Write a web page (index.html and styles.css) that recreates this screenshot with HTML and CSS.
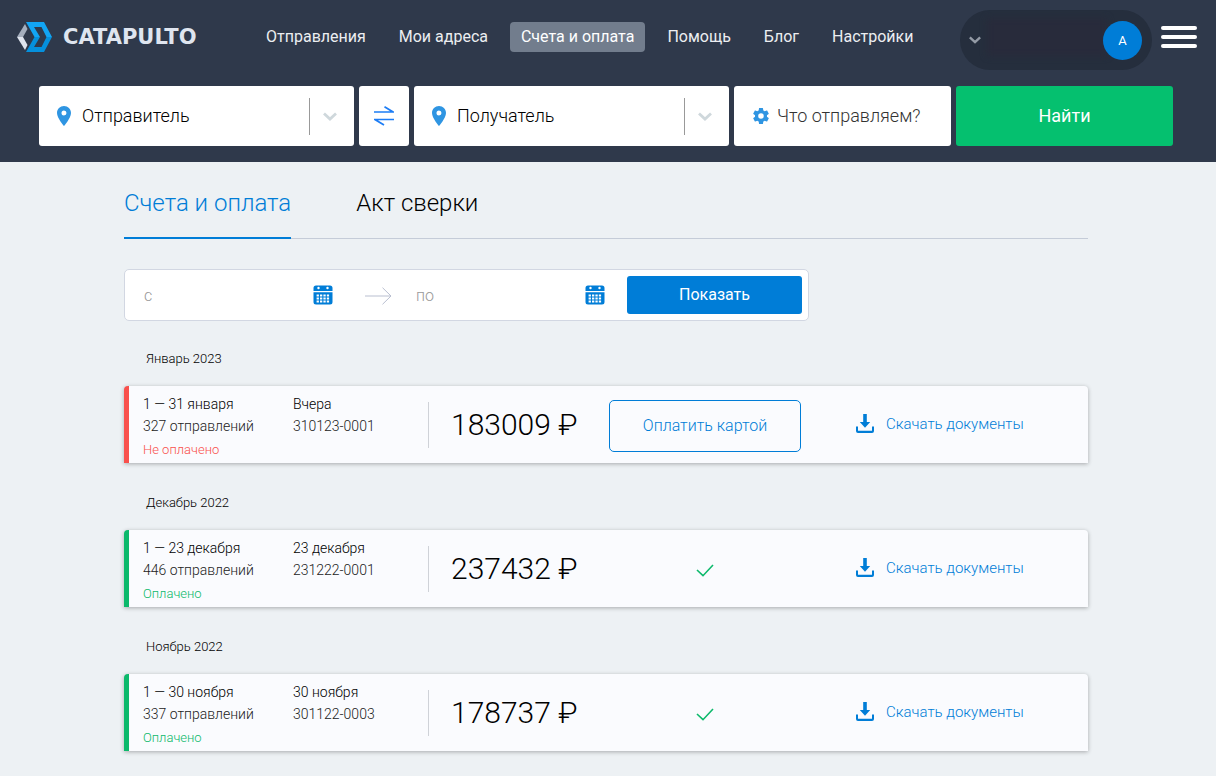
FILE: index.html
```html
<!DOCTYPE html>
<html lang="ru">
<head>
<meta charset="utf-8">
<meta name="viewport" content="width=device-width, initial-scale=1">
<title>Catapulto — Счета и оплата</title>
<link rel="stylesheet" href="styles.css">
</head>
<body>
<svg class="sprite" aria-hidden="true">
  <symbol id="pin" viewBox="0 0 14 20"><path fill-rule="evenodd" d="M7 0C3.1 0 0 3.1 0 7c0 5 7 13 7 13s7-8 7-13c0-3.900-3.100-7-7-7zm0 9.500a2.500 2.500 0 1 1 0-5 2.500 2.500 0 0 1 0 5z"/></symbol>
  <symbol id="chevron" viewBox="0 0 14 9"><path d="M1 1.500l6 5.500 6-5.500" fill="none" stroke="currentColor" stroke-width="2.800"/></symbol>
  <symbol id="calendar" viewBox="0 0 20 20"><path fill-rule="evenodd" d="M3 .5h14Q19.500.5 19.500 3v3H.5V3Q.5.5 3 .5zM5.500 1.800a1.200 1.200 0 1 0 0 2.400 1.200 1.200 0 0 0 0-2.400zm9 0a1.200 1.200 0 1 0 0 2.400 1.200 1.200 0 0 0 0-2.400zM.5 7.300h19V17q0 2.500-2.500 2.500H3Q.5 19.500.5 17z"/><path fill="#fff" d="M7 9.500h2.300v2H7zm3.400 0h2.300v2h-2.300zm3.400 0h2.300v2h-2.300zM3.600 12.500h2.300v2H3.600zm3.400 0h2.300v2H7zm3.400 0h2.300v2h-2.300zm3.400 0h2.300v2h-2.300zM3.600 15.500h2.300v2H3.600zm3.400 0h2.300v2H7zm3.400 0h2.300v2h-2.300zm3.400 0h2.300v2h-2.300zM3.600 9.500h2.300v2H3.600z"/></symbol>
  <symbol id="download" viewBox="0 0 18 19"><path d="M7.200 0h3.600v8h3.400L9 13.800 3.800 8h3.400zM0 12.500h2v4.200h14v-4.200h2V17q0 2-2 2H2q-2 0-2-2z"/></symbol>
  <symbol id="check" viewBox="0 0 18 13"><path d="M1 6l6 5.700L17 1" fill="none" stroke="currentColor" stroke-width="1.600"/></symbol>
</svg>

<header class="header">
  <div class="header-top">
    <a class="logo" href="#" aria-label="Catapulto">
      <svg class="logo-mark" viewBox="0 0 36 30" aria-hidden="true">
        <path fill="#a5aebd" d="M8 2l2.500 5-4.500 8H0z"/>
        <path fill="#dfe4ee" d="M0 15h6l4.500 8L8 28z"/>
        <path fill="#12a5f4" fill-rule="evenodd" d="M9 0h18l8 15h-5.500L24.500 5H17l6 10h-5.500z"/>
        <path fill="#0590dc" d="M35 15l-8 15H9l8.500-15H23l-6 10h7.500l5-10z"/>
      </svg>
      <span class="logo-text">CATAPULTO</span>
    </a>
    <nav class="nav" aria-label="Основное меню">
      <a class="nav-link" href="#">Отправления</a>
      <a class="nav-link" href="#">Мои адреса</a>
      <a class="nav-link nav-link-active" href="#" aria-current="page">Счета и оплата</a>
      <a class="nav-link" href="#">Помощь</a>
      <a class="nav-link" href="#">Блог</a>
      <a class="nav-link" href="#">Настройки</a>
    </nav>
    <button class="user" type="button" aria-label="Профиль">
      <svg class="user-chevron" aria-hidden="true"><use href="#chevron"/></svg>
      <span class="user-name"></span>
      <span class="avatar">A</span>
    </button>
    <button class="burger" type="button" aria-label="Меню"><span></span><span></span><span></span></button>
  </div>

  <form class="search">
    <div class="field">
      <svg class="pin" aria-hidden="true"><use href="#pin"/></svg>
      <input class="field-input" type="text" placeholder="Отправитель" aria-label="Отправитель">
      <button class="field-toggle" type="button" aria-label="Выбрать отправителя"><svg class="chevron" aria-hidden="true"><use href="#chevron"/></svg></button>
    </div>
    <button class="swap" type="button" aria-label="Поменять местами">
      <svg class="swap-icon" viewBox="0 0 20 20" aria-hidden="true"><path d="M0 6h19L10.500.8M20 13.500H1l9 5.500" fill="none" stroke="#1d7df5" stroke-width="1.700"/></svg>
    </button>
    <div class="field">
      <svg class="pin" aria-hidden="true"><use href="#pin"/></svg>
      <input class="field-input" type="text" placeholder="Получатель" aria-label="Получатель">
      <button class="field-toggle" type="button" aria-label="Выбрать получателя"><svg class="chevron" aria-hidden="true"><use href="#chevron"/></svg></button>
    </div>
    <div class="field field-cargo">
      <svg class="gear" viewBox="2 2 20 20" aria-hidden="true"><path d="M19.430 12.980c.04-.32.07-.64.07-.98s-.03-.66-.07-.98l2.110-1.650c.19-.15.24-.42.12-.64l-2-3.460c-.12-.22-.39-.3-.61-.22l-2.490 1c-.52-.4-1.080-.73-1.690-.98l-.38-2.650A.49.49 0 0 0 14 2h-4c-.25 0-.46.18-.49.42l-.38 2.650c-.61.25-1.170.59-1.690.98l-2.490-1c-.23-.09-.49 0-.61.22l-2 3.460c-.13.22-.07.49.12.64l2.110 1.650c-.04.32-.07.65-.07.98s.03.66.07.98l-2.110 1.650c-.19.15-.24.42-.12.64l2 3.460c.12.22.39.3.61.22l2.490-1c.52.4 1.080.73 1.690.98l.38 2.650c.03.24.24.42.49.42h4c.25 0 .46-.18.49-.42l.38-2.650c.61-.25 1.170-.59 1.690-.98l2.490 1c.23.09.49 0 .61-.22l2-3.460c.12-.22.07-.49-.12-.64zM12 15.500a3.500 3.500 0 1 1 0-7 3.500 3.500 0 0 1 0 7z"/></svg>
      <input class="field-input field-input-muted" type="text" placeholder="Что отправляем?" aria-label="Что отправляем?">
    </div>
    <button class="find" type="submit">Найти</button>
  </form>
</header>

<main class="main">
  <nav class="tabs" aria-label="Разделы">
    <a class="tab tab-active" href="#" aria-current="page">Счета и оплата</a>
    <a class="tab" href="#">Акт сверки</a>
  </nav>

  <form class="filter">
    <input class="date" type="text" placeholder="с" aria-label="Дата с">
    <button class="date-button" type="button" aria-label="Выбрать дату начала"><svg class="calendar" aria-hidden="true"><use href="#calendar"/></svg></button>
    <svg class="arrow" viewBox="0 0 27 18" aria-hidden="true"><path d="M0 9h26M17.500.7L26 9l-8.500 8.300" fill="none" stroke="#b9bfd0"/></svg>
    <input class="date" type="text" placeholder="по" aria-label="Дата по">
    <button class="date-button" type="button" aria-label="Выбрать дату окончания"><svg class="calendar" aria-hidden="true"><use href="#calendar"/></svg></button>
    <button class="show" type="submit">Показать</button>
  </form>

  <section class="month">
    <h2 class="month-title">Январь 2023</h2>
    <article class="bill bill-unpaid">
      <div class="period"><p class="strong">1 — 31 января</p><p>327 отправлений</p><p class="status">Не оплачено</p></div>
      <div class="number"><p class="strong">Вчера</p><p>310123-0001</p></div>
      <p class="amount">183009 ₽</p>
      <div class="payment"><button class="pay" type="button">Оплатить картой</button></div>
      <a class="download" href="#"><svg class="download-icon" aria-hidden="true"><use href="#download"/></svg>Скачать документы</a>
    </article>
  </section>

  <section class="month">
    <h2 class="month-title">Декабрь 2022</h2>
    <article class="bill">
      <div class="period"><p class="strong">1 — 23 декабря</p><p>446 отправлений</p><p class="status">Оплачено</p></div>
      <div class="number"><p class="strong">23 декабря</p><p>231222-0001</p></div>
      <p class="amount">237432 ₽</p>
      <div class="payment"><svg class="check" aria-hidden="true"><use href="#check"/></svg></div>
      <a class="download" href="#"><svg class="download-icon" aria-hidden="true"><use href="#download"/></svg>Скачать документы</a>
    </article>
  </section>

  <section class="month">
    <h2 class="month-title">Ноябрь 2022</h2>
    <article class="bill">
      <div class="period"><p class="strong">1 — 30 ноября</p><p>337 отправлений</p><p class="status">Оплачено</p></div>
      <div class="number"><p class="strong">30 ноября</p><p>301122-0003</p></div>
      <p class="amount">178737 ₽</p>
      <div class="payment"><svg class="check" aria-hidden="true"><use href="#check"/></svg></div>
      <a class="download" href="#"><svg class="download-icon" aria-hidden="true"><use href="#download"/></svg>Скачать документы</a>
    </article>
  </section>
</main>
</body>
</html>
```

FILE: styles.css
```css
* { box-sizing: border-box; }
body { margin: 0; background: #edf1f4; color: #000; font: 300 14px/22px Roboto, "Liberation Sans", sans-serif; }
button, input { font: inherit; margin: 0; padding: 0; border: 0; background: none; color: inherit; }
button { cursor: pointer; }
a { color: inherit; text-decoration: none; }
p, h2 { margin: 0; }
svg { display: block; flex: none; }
.sprite { position: absolute; width: 0; height: 0; }

.header { background: #2f394b; padding-bottom: 16px; }
.header-top { display: flex; align-items: center; height: 74px; padding: 0 19px 0 17px; }
.logo { display: flex; align-items: center; gap: 10px; width: 238px; }
.logo-mark { width: 36px; height: 30px; }
.logo-text { color: #dfe5ef; font: 700 21px/24px "DejaVu Sans", sans-serif; }
.nav { display: flex; gap: 11px; }
.nav-link { padding: 0 11px 1px; border-radius: 4px; color: #eceef1; font-size: 16px; font-weight: 400; line-height: 29px; white-space: nowrap; }
.nav-link-active { background: #727d8d; color: #fff; }
.user { display: flex; align-items: center; width: 192px; height: 60px; margin: 6px 9px 0 auto; padding: 0 10px 0 9px; border-radius: 30px; background: #252e3d; }
.user-chevron { width: 12px; height: 8px; color: #949ba6; }
.user-name { flex: 1; height: 38px; margin: 0 -4px 6px 6px; background: #282b3b; filter: blur(3px); }
.avatar { position: relative; width: 39px; border-radius: 50%; background: #007dd7; color: #fff; font-size: 13px; font-weight: 400; line-height: 39px; text-align: center; }
.burger { display: grid; gap: 5px; width: 36px; }
.burger span { height: 4px; border-radius: 2px; background: #fff; }

.search { display: grid; grid-template-columns: 315fr 50px 315fr 217fr 217fr; gap: 5px; padding: 12px 43px 0 39px; }
.field { display: flex; align-items: center; min-width: 0; height: 60px; padding-left: 18px; border-radius: 3px; background: #fff; }
.pin { width: 14px; height: 20px; margin-right: 11px; fill: #2f95e2; }
.field-input { flex: 1; width: 0; height: 60px; padding-bottom: 2px; font-size: 18px; outline: 0; }
.field-input::placeholder { color: #000; opacity: 1; }
.field-input-muted::placeholder { color: #333; }
.field-toggle { display: grid; place-items: center; width: 45px; height: 37px; padding-right: 5px; border-left: 1px solid #999; color: #cfd8dc; }
.chevron { width: 14px; height: 9px; }
.swap { display: grid; place-items: center; border-radius: 3px; background: #fff; }
.swap-icon { width: 20px; height: 20px; }
.field-cargo { padding-left: 19px; }
.gear { width: 16px; height: 16px; margin-right: 8px; fill: #2f95e2; }
.find { border-radius: 3px; background: #05c06f; color: #fff; font-size: 18px; font-weight: 400; }

.main { padding: 17px 128px 24px 124px; }
.tabs { display: flex; gap: 65px; box-shadow: inset 0 -1px #c5ccd8; }
.tab { padding: 8px 0 18px; border-bottom: 2px solid transparent; font-size: 24px; line-height: 32px; }
.tab-active { border-color: #007dd7; color: #007dd7; }
.filter { display: flex; align-items: center; max-width: 685px; margin: 30px 0 27px; padding: 6px 6px 6px 19px; border: 1px solid #d2d7e2; border-radius: 5px; background: #fff; }
.date { flex: 1; width: 0; height: 38px; font-size: 16px; outline: 0; }
.date::placeholder { color: #999; opacity: 1; }
.date-button { margin-right: 22px; }
.calendar { width: 20px; height: 20px; fill: #007dd7; }
.arrow { width: 27px; height: 18px; margin: 2px 24px 0 10px; }
.show { width: 175px; height: 38px; border-radius: 3px; background: #007dd7; color: #fff; font-size: 16px; font-weight: 400; }

.month { margin-bottom: 29px; }
.month-title { padding: 0 22px; font-size: 13px; font-weight: 300; line-height: 22px; }
.bill { display: grid; grid-template-columns: 150px 135px 159px 232px 1fr; align-items: center; min-height: 77px; margin-top: 16px; padding-left: 14px; border-left: 5px solid #0cb96b; border-radius: 4px 4px 0 0; background: #fafbfe; box-shadow: 0 1px 4px rgba(0, 0, 0, .3); color: #222; }
.period, .number { align-self: start; padding-top: 7px; }
.strong { color: #000; }
.status { color: #0cb96b; font-size: 13px; line-height: 26px; }
.bill-unpaid { border-left-color: #f9504c; }
.bill-unpaid .status { color: #f9504c; }
.amount { padding-left: 22px; border-left: 1px solid #cfd2d8; color: #000; font-size: 30px; line-height: 46px; white-space: nowrap; }
.payment { display: grid; place-items: center; width: 192px; margin: 2px 0 0 22px; }
.pay { width: 192px; height: 52px; border: 1px solid #007dd7; border-radius: 5px; color: #007dd7; font-size: 16px; }
.check { width: 18px; height: 13px; margin-top: 2px; color: #0cb96b; }
.download { display: flex; align-items: center; gap: 12px; padding: 0 0 2px 37px; color: #007dd7; font-size: 15px; }
.download-icon { width: 18px; height: 19px; fill: #007dd7; }
```
